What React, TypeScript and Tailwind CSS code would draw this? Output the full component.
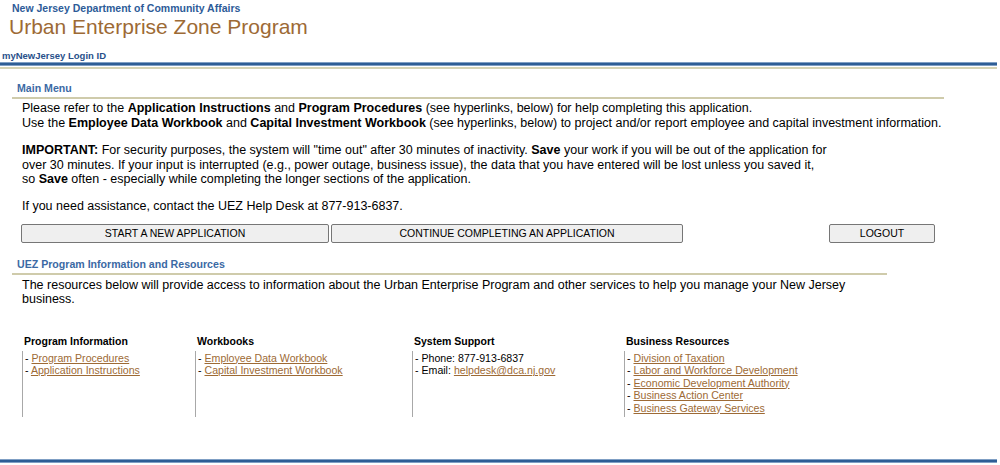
export default function App() {
  const columns = [
    {
      title: 'Program Information',
      items: [
        { link: 'Program Procedures' },
        { link: 'Application Instructions' },
      ],
    },
    {
      title: 'Workbooks',
      items: [
        { link: 'Employee Data Workbook' },
        { link: 'Capital Investment Workbook' },
      ],
    },
    {
      title: 'System Support',
      items: [
        { text: 'Phone: 877-913-6837' },
        { text: 'Email: ', link: 'helpdesk@dca.nj.gov' },
      ],
    },
    {
      title: 'Business Resources',
      items: [
        { link: 'Division of Taxation' },
        { link: 'Labor and Workforce Development' },
        { link: 'Economic Development Authority' },
        { link: 'Business Action Center' },
        { link: 'Business Gateway Services' },
      ],
    },
  ];
  const widths = ['w-[173px]', 'w-[217px]', 'w-[212px]', 'w-[260px]'];

  return (
    <div className="min-h-[465px] bg-white text-black font-['Liberation_Sans',Arial,sans-serif]">
      {/* header */}
      <div className="pl-[12px] pt-[2px]">
        <div className="text-[10.5px] leading-[13px] font-bold text-[#2d5b98]">New Jersey Department of Community Affairs</div>
        <div className="-ml-[3px] text-[21px] leading-[24px] text-[#9d6a35]">Urban Enterprise Zone Program</div>
      </div>
      <div className="mt-[11px] pl-[2px] text-[9.5px] leading-[12px] font-bold text-[#28508a]">myNewJersey Login ID</div>
      <div className="w-[997px] h-[4px] bg-[#2e5d95] border-y border-[#7f9fc4]" />
      <div className="w-[997px] h-[2px] mt-[1px] bg-[#d6d3b4]" />

      {/* main menu */}
      <div className="ml-[12px] w-[932px] mt-[13px]">
        <div className="pl-[5px] pb-[2px] text-[10.6px] leading-[13px] font-bold text-[#3b69a4] border-b-2 border-[#cfcbab]">Main Menu</div>
        <div className="pl-[10px] pt-[2px] text-[12.5px] leading-[14.6px] whitespace-nowrap">
          <p>
            Please refer to the <b>Application Instructions</b> and <b>Program Procedures</b> (see hyperlinks, below) for help completing this application.
            <br />
            Use the <b>Employee Data Workbook</b> and <b>Capital Investment Workbook</b> (see hyperlinks, below) to project and/or report employee and capital investment information.
          </p>
          <p className="mt-[13px]">
            <b>IMPORTANT:</b> For security purposes, the system will "time out" after 30 minutes of inactivity. <b>Save</b> your work if you will be out of the application for
            <br />
            over 30 minutes. If your input is interrupted (e.g., power outage, business issue), the data that you have entered will be lost unless you saved it,
            <br />
            so <b>Save</b> often - especially while completing the longer sections of the application.
          </p>
          <p className="mt-[12px]">If you need assistance, contact the UEZ Help Desk at 877-913-6837.</p>
        </div>
        <div className="flex mt-[10px] pl-[9px] text-[10.5px] leading-[14px]">
          <button className="w-[308px] h-[19px] bg-[#efefef] border border-[#767676] rounded-[2px]">START A NEW APPLICATION</button>
          <button className="ml-[2px] w-[352px] h-[19px] bg-[#efefef] border border-[#767676] rounded-[2px]">CONTINUE COMPLETING AN APPLICATION</button>
          <button className="ml-[146px] w-[106px] h-[19px] bg-[#efefef] border border-[#767676] rounded-[2px]">LOGOUT</button>
        </div>
      </div>

      {/* resources */}
      <div className="ml-[12px] w-[875px] mt-[15px]">
        <div className="pl-[5px] pb-[2px] text-[10.6px] leading-[13px] font-bold text-[#3b69a4] border-b-2 border-[#cfcbab]">UEZ Program Information and Resources</div>
        <p className="pl-[10px] pt-[3px] pr-[20px] text-[12.5px] leading-[14.6px]">
          The resources below will provide access to information about the Urban Enterprise Program and other services to help you manage your New Jersey business.
        </p>
      </div>

      <div className="flex ml-[22px] mt-[28px]">
        {columns.map((col, i) => (
          <div key={col.title} className={`${widths[i]} flex flex-col`}>
            <div className="pl-[2px] pb-[3px] text-[10.5px] leading-[13px] font-bold">{col.title}</div>
            <div className="flex-1 border-l border-[#a8a8a8] pl-[2px] pt-[1px] pb-[3px] text-[10.6px] leading-[12.5px]">
              {col.items.map((it, j) => (
                <div key={j} className="whitespace-nowrap">
                  - {it.text}
                  {it.link && <a href="#" className="text-[#9d6a35] underline">{it.link}</a>}
                </div>
              ))}
            </div>
          </div>
        ))}
      </div>

      <div className="mt-[42px] w-[997px] h-[4px] bg-[#2e5d95] border-y border-[#7f9fc4]" />
    </div>
  );
}
